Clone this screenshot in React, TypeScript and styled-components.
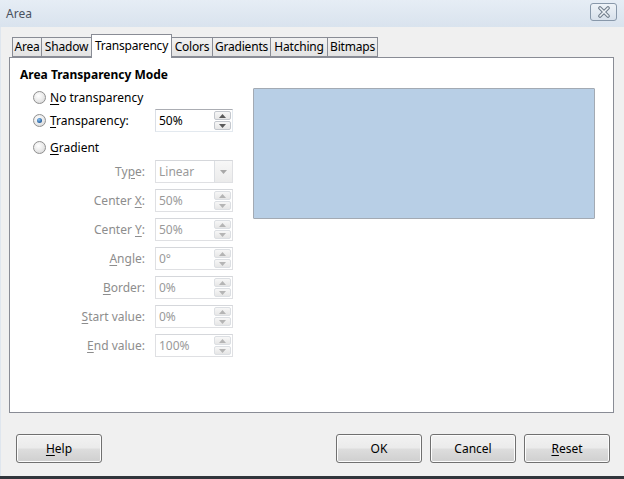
import React from "react";
import styled, { createGlobalStyle } from "styled-components";

const Global = createGlobalStyle`
  html, body { margin: 0; padding: 0; background: #f0f0f0; }
  body { font-family: "Noto Sans", "Open Sans", sans-serif; font-size: 12px; color: #000; }
  * { box-sizing: border-box; }
`;

const Window = styled.div`
  width: 624px;
  height: 479px;
  display: flex;
  flex-direction: column;
  background: #f0f0f0;
  border-bottom: 3px solid #30353b;
  overflow: hidden;
`;

const TitleBar = styled.div`
  height: 27px;
  flex: none;
  display: flex;
  align-items: center;
  justify-content: space-between;
  padding: 0 7px 0 6px;
  background: linear-gradient(#e6edf5, #d9e3ee);
  color: #4a5260;
  font-size: 12px;
`;

const CloseBtn = styled.div`
  width: 27px;
  height: 18px;
  margin-top: -3px;
  border: 1px solid #8898aa;
  border-radius: 3px;
  background: linear-gradient(#eef3f8, #d8e1eb);
  display: flex;
  align-items: center;
  justify-content: center;
`;

const Body = styled.div`
  flex: 1;
  display: flex;
  flex-direction: column;
  padding: 7px 10px 0 8px;
  border-left: 1px solid #dfe6ee;
`;

const TabStrip = styled.div`
  display: flex;
  align-items: flex-end;
  height: 23px;
  padding-left: 3px;
  position: relative;
  z-index: 1;
`;

const Tab = styled.div<{ $active?: boolean; $w: number }>`
  width: ${(p) => p.$w}px;
  height: ${(p) => (p.$active ? "24px" : "20px")};
  margin-bottom: ${(p) => (p.$active ? "-1px" : "0")};
  border: 1px solid #898c95;
  border-bottom: ${(p) => (p.$active ? "none" : "1px solid #898c95")};
  margin-right: -1px;
  background: ${(p) => (p.$active ? "#fff" : "linear-gradient(#f2f2f2, #e3e3e3)")};
  display: flex;
  align-items: center;
  justify-content: center;
  padding-bottom: ${(p) => (p.$active ? "3px" : "1px")};
  white-space: nowrap;
  letter-spacing: -0.2px;
  position: relative;
  z-index: ${(p) => (p.$active ? 2 : 1)};
`;

const Panel = styled.div`
  height: 356px;
  flex: none;
  border: 1px solid #898c95;
  background: #fff;
  display: flex;
  padding: 8px 0 0 10px;
`;

const LeftCol = styled.div`
  width: 223px;
  display: flex;
  flex-direction: column;
`;

const Heading = styled.div`
  font-weight: bold;
  height: 17px;
  line-height: 17px;
`;

const RadioRow = styled.div<{ $mt: number }>`
  height: 23px;
  margin-top: ${(p) => p.$mt}px;
  display: flex;
  align-items: center;
  padding-left: 13px;
`;

const RadioCircle = styled.span<{ $checked?: boolean }>`
  width: 13px;
  height: 13px;
  border-radius: 50%;
  border: 1px solid #8f8f8f;
  background: radial-gradient(circle at 40% 35%, #ffffff 0%, #e8e8e8 55%, #cfcfcf 100%);
  display: inline-flex;
  align-items: center;
  justify-content: center;
  flex: none;
  &::after {
    content: "";
    display: ${(p) => (p.$checked ? "block" : "none")};
    width: 5px;
    height: 5px;
    border-radius: 50%;
    background: radial-gradient(circle at 40% 35%, #8ec3f0 0%, #2f6aa8 60%, #1d4b80 100%);
  }
`;

const RadioLabel = styled.span<{ $w?: number }>`
  margin-left: 4px;
  width: ${(p) => (p.$w ? `${p.$w}px` : "auto")};
  flex: none;
`;

const Fields = styled.div`
  display: flex;
  flex-direction: column;
  gap: 6px;
  margin-top: 1px;
`;

const FieldRow = styled.div`
  height: 23px;
  display: grid;
  grid-template-columns: 125px 78px;
  column-gap: 10px;
  align-items: center;
`;

const FieldLabel = styled.span<{ $disabled?: boolean }>`
  text-align: right;
  color: ${(p) => (p.$disabled ? "#8d8d8d" : "#000")};
`;

const Box = styled.div<{ $disabled?: boolean }>`
  width: 78px;
  height: 23px;
  border: 1px solid ${(p) => (p.$disabled ? "#d5d7db" : "#abadb3")};
  border-left-color: ${(p) => (p.$disabled ? "#dfe0e3" : "#dbdfe6")};
  border-right-color: ${(p) => (p.$disabled ? "#dfe0e3" : "#e3e9ef")};
  border-bottom-color: ${(p) => (p.$disabled ? "#dfe0e3" : "#e3e9ef")};
  background: #fff;
  display: flex;
  align-items: center;
  padding-left: 3px;
  color: ${(p) => (p.$disabled ? "#9a9a9a" : "#000")};
`;

const Value = styled.span`
  flex: 1;
`;

const Spin = styled.div`
  width: 17px;
  height: 19px;
  margin-right: 1px;
  display: flex;
  flex-direction: column;
  gap: 1px;
`;

const SpinBtn = styled.div<{ $disabled?: boolean }>`
  flex: 1;
  border: 1px solid ${(p) => (p.$disabled ? "#dcdfe3" : "#c3c7cd")};
  border-radius: 2px;
  background: linear-gradient(#f7f7f7, #e6e6e6);
  display: flex;
  align-items: center;
  justify-content: center;
`;

const DropBtn = styled.div`
  width: 18px;
  height: 21px;
  border-left: 1px solid #dcdfe3;
  background: linear-gradient(#f7f7f7, #ebebeb);
  display: flex;
  align-items: center;
  justify-content: center;
`;

const Preview = styled.div`
  margin-left: 10px;
  margin-top: 22px;
  width: 342px;
  height: 131px;
  border: 1px solid #a3aab3;
  border-radius: 1px;
  background: #b8cfe6;
`;

const ButtonRow = styled.div`
  display: flex;
  align-items: center;
  gap: 8px;
  margin-top: 21px;
  padding: 0 4px 0 7px;
`;

const Spacer = styled.div`
  flex: 1;
`;

const Button = styled.div`
  width: 86px;
  height: 29px;
  border: 1px solid #707070;
  border-radius: 3px;
  background: linear-gradient(#f2f2f2 0%, #ebebeb 48%, #dddddd 52%, #cfcfcf 100%);
  box-shadow: inset 0 0 0 1px #fcfcfc;
  display: flex;
  align-items: center;
  justify-content: center;
`;

const U = styled.span`
  text-decoration: underline;
  text-underline-offset: 2px;
`;

const Tri = ({ up, color }: { up?: boolean; color: string }) => (
  <svg width="7" height="4" viewBox="0 0 7 4">
    <path d={up ? "M0 4 L3.5 0 L7 4 Z" : "M0 0 L7 0 L3.5 4 Z"} fill={color} />
  </svg>
);

const SpinField = ({ value, disabled }: { value: string; disabled?: boolean }) => (
  <Box $disabled={disabled}>
    <Value>{value}</Value>
    <Spin>
      <SpinBtn $disabled={disabled}>
        <Tri up color={disabled ? "#b5b5b5" : "#5a5a5a"} />
      </SpinBtn>
      <SpinBtn $disabled={disabled}>
        <Tri color={disabled ? "#b5b5b5" : "#5a5a5a"} />
      </SpinBtn>
    </Spin>
  </Box>
);

const rows: { label: React.ReactNode; value: string }[] = [
  { label: <>Center <U>X</U>:</>, value: "50%" },
  { label: <>Center <U>Y</U>:</>, value: "50%" },
  { label: <><U>A</U>ngle:</>, value: "0°" },
  { label: <><U>B</U>order:</>, value: "0%" },
  { label: <><U>S</U>tart value:</>, value: "0%" },
  { label: <><U>E</U>nd value:</>, value: "100%" },
];

const tabs: { name: string; w: number }[] = [
  { name: "Area", w: 30 },
  { name: "Shadow", w: 51 },
  { name: "Transparency", w: 81 },
  { name: "Colors", w: 42 },
  { name: "Gradients", w: 59 },
  { name: "Hatching", w: 58 },
  { name: "Bitmaps", w: 51 },
];

export default function App() {
  return (
    <>
      <Global />
      <Window>
        <TitleBar>
          <span>Area</span>
          <CloseBtn>
            <svg width="14" height="12" viewBox="0 0 14 12">
              <path d="M3 2 L11 10 M11 2 L3 10" stroke="#6f7c8a" strokeWidth="3.6" strokeLinecap="round" />
              <path d="M3 2 L11 10 M11 2 L3 10" stroke="#eef2f6" strokeWidth="1.6" strokeLinecap="round" />
            </svg>
          </CloseBtn>
        </TitleBar>
        <Body>
          <TabStrip>
            {tabs.map((t) => (
              <Tab key={t.name} $w={t.w} $active={t.name === "Transparency"}>
                {t.name}
              </Tab>
            ))}
          </TabStrip>
          <Panel>
            <LeftCol>
              <Heading>Area Transparency Mode</Heading>
              <RadioRow $mt={3}>
                <RadioCircle />
                <RadioLabel>
                  <U>N</U>o transparency
                </RadioLabel>
              </RadioRow>
              <RadioRow $mt={0}>
                <RadioCircle $checked />
                <RadioLabel $w={105}>
                  <U>T</U>ransparency:
                </RadioLabel>
                <SpinField value="50%" />
              </RadioRow>
              <RadioRow $mt={4}>
                <RadioCircle />
                <RadioLabel>
                  <U>G</U>radient
                </RadioLabel>
              </RadioRow>
              <Fields>
                <FieldRow>
                  <FieldLabel $disabled>
                    Ty<U>p</U>e:
                  </FieldLabel>
                  <Box $disabled>
                    <Value>Linear</Value>
                    <DropBtn>
                      <Tri color="#a8a8a8" />
                    </DropBtn>
                  </Box>
                </FieldRow>
                {rows.map((r, i) => (
                  <FieldRow key={i}>
                    <FieldLabel $disabled>{r.label}</FieldLabel>
                    <SpinField value={r.value} disabled />
                  </FieldRow>
                ))}
              </Fields>
            </LeftCol>
            <Preview />
          </Panel>
          <ButtonRow>
            <Button>
              <span>
                <U>H</U>elp
              </span>
            </Button>
            <Spacer />
            <Button>OK</Button>
            <Button>Cancel</Button>
            <Button>
              <span>
                <U>R</U>eset
              </span>
            </Button>
          </ButtonRow>
        </Body>
      </Window>
    </>
  );
}
